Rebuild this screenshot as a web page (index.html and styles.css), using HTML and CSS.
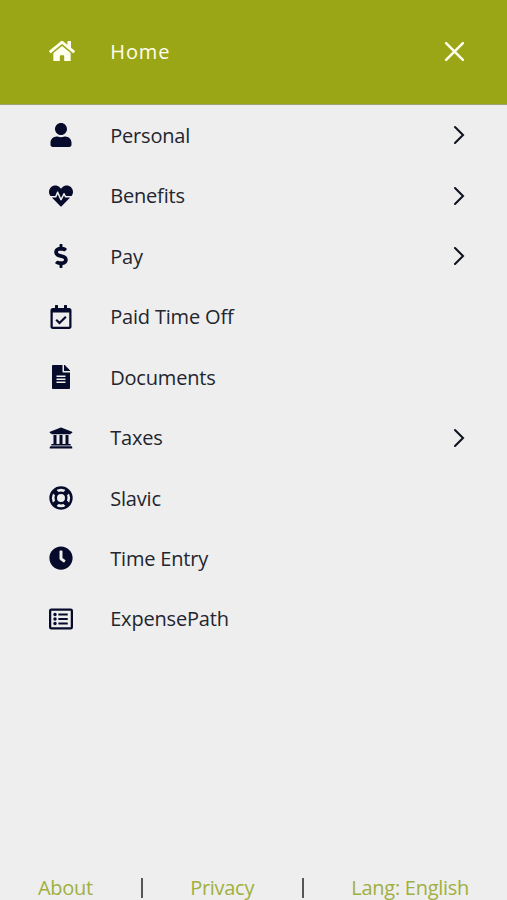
FILE: index.html
```
<!DOCTYPE html>
<html lang="en">
<head>
  <meta charset="UTF-8" />
  <meta name="viewport" content="width=device-width, initial-scale=1.0" />
  <title>Menu</title>
  <link rel="stylesheet" href="styles.css">
</head>
<body>
  <div class="header">
    <svg class="home-icon" viewBox="0 0 576 512"><path d="M280.37 148.26L96 300.11V464a16 16 0 0 0 16 16l112.06-.29a16 16 0 0 0 15.92-16V368a16 16 0 0 1 16-16h64a16 16 0 0 1 16 16v95.64a16 16 0 0 0 16 16.05L464 480a16 16 0 0 0 16-16V300L295.67 148.26a12.19 12.19 0 0 0-15.3 0zM571.6 251.47L488 182.56V44.05a12 12 0 0 0-12-12h-56a12 12 0 0 0-12 12v72.61L318.47 43a48 48 0 0 0-61 0L4.34 251.47a12 12 0 0 0-1.6 16.9l25.5 31A12 12 0 0 0 45.15 301l235.22-193.74a12.19 12.19 0 0 1 15.3 0L530.9 301a12 12 0 0 0 16.9-1.6l25.5-31a12 12 0 0 0-1.7-16.93z"/></svg>
    <a class="label" href="#">Home</a>
    <svg class="close" viewBox="0 0 20 20"><path d="M2 2l16 16M18 2L2 18"/></svg>
  </div>

  <nav class="menu">
    <a class="item" href="#">
      <svg class="icon" viewBox="-32 0 512 512"><path d="M224 256c70.7 0 128-57.3 128-128S294.7 0 224 0 96 57.3 96 128s57.3 128 128 128zm89.6 32h-16.7c-22.2 10.2-46.9 16-72.9 16s-50.6-5.8-72.9-16h-16.7C60.2 288 0 348.2 0 422.4V464c0 26.5 21.5 48 48 48h352c26.5 0 48-21.5 48-48v-41.6c0-74.2-60.2-134.4-134.4-134.4z"/></svg>
      <span class="label">Personal</span>
      <svg class="arrow" viewBox="0 0 12 20"><path d="M2 2l8 8-8 8"/></svg>
    </a>
    <a class="item" href="#">
      <svg class="icon" viewBox="0 0 512 512"><path d="M320.2 243.8l-49.7 99.4c-6 12.1-23.4 11.7-28.9-.6l-56.9-126.3-30 71.7H60.6l182.5 186.5c7.1 7.3 18.6 7.3 25.7 0L451.4 288H342.3l-22.1-44.2zM473.7 73.9l-2.4-2.5c-51.5-52.6-135.8-52.6-187.4 0L256 100l-27.9-28.5c-51.5-52.7-135.9-52.7-187.4 0l-2.4 2.4C-10.4 123.7-12.5 203 31 256h102.4l35.9-86.2c5.4-12.9 23.6-13.1 29.3-.4l58.2 129.3 49-97.9c5.9-11.8 22.7-11.8 28.6 0l27.6 55.2H481c43.5-53 41.4-132.3-7.3-182.1z"/></svg>
      <span class="label">Benefits</span>
      <svg class="arrow" viewBox="0 0 12 20"><path d="M2 2l8 8-8 8"/></svg>
    </a>
    <a class="item" href="#">
      <svg class="icon" viewBox="-112 0 512 512"><path d="M209.2 233.4l-108-31.6C88.7 198.2 80 186.5 80 173.5c0-16.3 13.2-29.5 29.5-29.5h66.3c12.2 0 24.2 3.7 34.2 10.5 6.1 4.1 14.3 3.1 19.5-2l34.8-34c7.1-6.9 6.1-18.4-1.8-24.5C238 74.8 207.4 64.1 176 64V16c0-8.8-7.2-16-16-16h-32c-8.8 0-16 7.2-16 16v48h-2.5C45.8 64-5.4 118.7.5 183.6c4.2 46.1 39.4 83.6 83.8 96.6l102.5 30c12.5 3.7 21.2 15.3 21.2 28.3 0 16.3-13.2 29.5-29.5 29.5h-66.3C100 368 88 364.3 78 357.5c-6.1-4.1-14.3-3.1-19.5 2l-34.8 34c-7.1 6.9-6.1 18.4 1.8 24.5 24.5 19.2 55.1 29.9 86.5 30v48c0 8.8 7.2 16 16 16h32c8.8 0 16-7.2 16-16v-48.2c46.6-.9 90.3-28.6 105.7-72.7 21.5-61.6-14.6-124.8-72.5-141.7z"/></svg>
      <span class="label">Pay</span>
      <svg class="arrow" viewBox="0 0 12 20"><path d="M2 2l8 8-8 8"/></svg>
    </a>
    <a class="item" href="#">
      <svg class="icon" viewBox="-32 0 512 512"><path d="M400 64h-48V12c0-6.627-5.373-12-12-12h-40c-6.627 0-12 5.373-12 12v52H160V12c0-6.627-5.373-12-12-12h-40c-6.627 0-12 5.373-12 12v52H48C21.49 64 0 85.49 0 112v352c0 26.51 21.49 48 48 48h352c26.51 0 48-21.49 48-48V112c0-26.51-21.49-48-48-48zm-6 400H54a6 6 0 0 1-6-6V160h352v298a6 6 0 0 1-6 6z"/><path class="line" stroke-width="46" d="M122 316l70 68 136-132"/></svg>
      <span class="label">Paid Time Off</span>
    </a>
    <a class="item" href="#">
      <svg class="icon" viewBox="-64 0 512 512"><path d="M224 136V0H24C10.7 0 0 10.7 0 24v464c0 13.3 10.7 24 24 24h336c13.3 0 24-10.7 24-24V160H248c-13.2 0-24-10.8-24-24zm160-14.1v6.1H256V0h6.1c6.4 0 12.5 2.5 17 7l97.9 98c4.5 4.5 7 10.6 7 16.9z"/><path class="cut" stroke-width="32" d="M96 240h192M96 304h192M96 368h192"/></svg>
      <span class="label">Documents</span>
    </a>
    <a class="item" href="#">
      <svg class="icon" viewBox="0 0 512 512"><path d="M496 128v16a8 8 0 0 1-8 8h-24v12c0 6.627-5.373 12-12 12H60c-6.627 0-12-5.373-12-12v-12H24a8 8 0 0 1-8-8v-16a8 8 0 0 1 4.941-7.392l232-88a7.996 7.996 0 0 1 6.118 0l232 88A8 8 0 0 1 496 128zm-24 304H40c-13.255 0-24 10.745-24 24v16a8 8 0 0 0 8 8h464a8 8 0 0 0 8-8v-16c0-13.255-10.745-24-24-24zM96 192v192H60c-6.627 0-12 5.373-12 12v20h416v-20c0-6.627-5.373-12-12-12h-36V192h-64v192h-64V192h-64v192h-64V192H96z"/></svg>
      <span class="label">Taxes</span>
      <svg class="arrow" viewBox="0 0 12 20"><path d="M2 2l8 8-8 8"/></svg>
    </a>
    <a class="item" href="#">
      <svg class="icon" viewBox="0 0 512 512"><circle class="line" cx="256" cy="256" r="222" stroke-width="54"/><circle class="line" cx="256" cy="256" r="112" stroke-width="54"/><path class="line" stroke-width="104" stroke-linecap="butt" d="M98 98l84 84M414 98l-84 84M98 414l84-84M414 414l-84-84"/></svg>
      <span class="label">Slavic</span>
    </a>
    <a class="item" href="#">
      <svg class="icon" viewBox="0 0 512 512"><path d="M256,8C119,8,8,119,8,256S119,504,256,504,504,393,504,256,393,8,256,8Zm92.49,313h0l-20,25a16,16,0,0,1-22.49,2.5h0l-67-49.72a40,40,0,0,1-15-31.23V112a16,16,0,0,1,16-16h32a16,16,0,0,1,16,16V256l58,42.5A16,16,0,0,1,348.49,321Z"/></svg>
      <span class="label">Time Entry</span>
    </a>
    <a class="item" href="#">
      <svg class="icon" viewBox="0 0 512 512"><rect class="line" x="24" y="56" width="464" height="400" rx="26" stroke-width="48"/><circle cx="128" cy="160" r="36"/><circle cx="128" cy="256" r="36"/><circle cx="128" cy="352" r="36"/><path class="line" stroke-width="42" d="M200 160h200M200 256h200M200 352h200"/></svg>
      <span class="label">ExpensePath</span>
    </a>
  </nav>

  <div class="footer">
    <a href="#">About</a>
    <span class="divider"></span>
    <a href="#">Privacy</a>
    <span class="divider"></span>
    <a href="#">Lang: English</a>
  </div>
</body>
</html>
```
FILE: styles.css
```
* { box-sizing: border-box; }
body { font-family: 'Open Sans', 'Noto Sans', sans-serif; font-size: 20px; letter-spacing: -0.18px; background: #eeeeee; color: #23252f; margin: 0; height: 900px; display: flex; flex-direction: column; overflow: hidden; }
a { color: inherit; text-decoration: none; }
svg { display: block; flex: none; }

.header { height: 105px; padding: 0 42px 2px 49px; background: #9ba617; border-bottom: 1px solid #a0a177; display: flex; align-items: center; color: #fffff0; }
.header .label { letter-spacing: 0.9px; margin-left: 35.3px; }
.home-icon { width: 26px; height: 24px; fill: #fffff0; }
.close { width: 21px; height: 21px; margin-left: auto; fill: none; stroke: #fffff0; stroke-width: 2.4; stroke-linecap: round; }

.menu { flex: 1; padding-top: 0.2px; }
.item { height: 60.45px; padding: 0 42px 0 49px; display: flex; align-items: center; }
.item .label { margin-left: 37.2px; }
.icon { width: 24px; height: 24px; fill: #060b2b; }
.icon .line { fill: none; stroke: #060b2b; }
.icon .cut { fill: none; stroke: #eeeeee; }
.arrow { width: 12px; height: 20px; margin-left: auto; fill: none; stroke: #111320; stroke-width: 2.1; stroke-linecap: round; }

.footer { height: 27px; padding: 2px 38px 0; letter-spacing: -0.28px; display: flex; align-items: center; justify-content: space-between; color: #9fb03f; }
.divider { width: 2px; height: 20px; background: #55565a; }
```
